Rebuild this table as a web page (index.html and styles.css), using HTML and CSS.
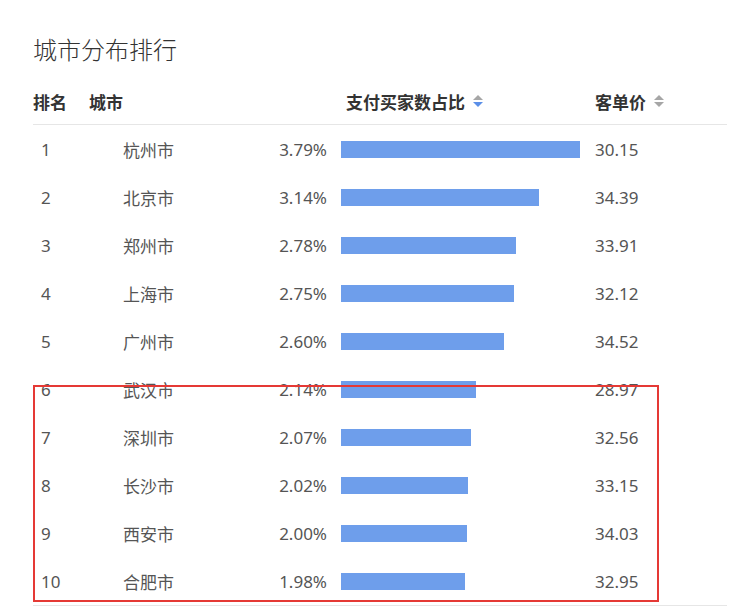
FILE: index.html
```html
<!DOCTYPE html>
<html lang="zh-CN">
<head>
<meta charset="utf-8">
<title>城市分布排行</title>
<link rel="stylesheet" href="styles.css">
</head>
<body>
<div class="panel">
  <h2 class="title">城市分布排行</h2>
  <div class="table">
    <div class="thead">
      <div class="th th-rank">排名</div>
      <div class="th th-city">城市</div>
      <div class="th th-pct">支付买家数占比<span class="sort active-down"><i class="up"></i><i class="down"></i></span></div>
      <div class="th th-price">客单价<span class="sort"><i class="up"></i><i class="down"></i></span></div>
    </div>
    <div class="tbody">
      <div class="row"><div class="c-rank">1</div><div class="c-city">杭州市</div><div class="c-pct">3.79%</div><div class="c-bar"><span class="bar" style="width:239px"></span></div><div class="c-price">30.15</div></div>
      <div class="row"><div class="c-rank">2</div><div class="c-city">北京市</div><div class="c-pct">3.14%</div><div class="c-bar"><span class="bar" style="width:198px"></span></div><div class="c-price">34.39</div></div>
      <div class="row"><div class="c-rank">3</div><div class="c-city">郑州市</div><div class="c-pct">2.78%</div><div class="c-bar"><span class="bar" style="width:175px"></span></div><div class="c-price">33.91</div></div>
      <div class="row"><div class="c-rank">4</div><div class="c-city">上海市</div><div class="c-pct">2.75%</div><div class="c-bar"><span class="bar" style="width:173px"></span></div><div class="c-price">32.12</div></div>
      <div class="row"><div class="c-rank">5</div><div class="c-city">广州市</div><div class="c-pct">2.60%</div><div class="c-bar"><span class="bar" style="width:163px"></span></div><div class="c-price">34.52</div></div>
      <div class="row"><div class="c-rank">6</div><div class="c-city">武汉市</div><div class="c-pct">2.14%</div><div class="c-bar"><span class="bar" style="width:135px"></span></div><div class="c-price">28.97</div></div>
      <div class="row"><div class="c-rank">7</div><div class="c-city">深圳市</div><div class="c-pct">2.07%</div><div class="c-bar"><span class="bar" style="width:130px"></span></div><div class="c-price">32.56</div></div>
      <div class="row"><div class="c-rank">8</div><div class="c-city">长沙市</div><div class="c-pct">2.02%</div><div class="c-bar"><span class="bar" style="width:127px"></span></div><div class="c-price">33.15</div></div>
      <div class="row"><div class="c-rank">9</div><div class="c-city">西安市</div><div class="c-pct">2.00%</div><div class="c-bar"><span class="bar" style="width:126px"></span></div><div class="c-price">34.03</div></div>
      <div class="row last"><div class="c-rank">10</div><div class="c-city">合肥市</div><div class="c-pct">1.98%</div><div class="c-bar"><span class="bar" style="width:124px"></span></div><div class="c-price">32.95</div></div>
      <div class="highlight"></div>
    </div>
  </div>
</div>
</body>
</html>
```
FILE: styles.css
```css
html, body {
  margin: 0;
  padding: 0;
  background: #ffffff;
}
body {
  font-family: "Noto Sans", "Noto Sans CJK SC", sans-serif;
  color: #555;
}
.panel {
  padding: 34px 23px 0 33px;
}
.title {
  margin: 0;
  font-size: 24px;
  line-height: 32px;
  font-weight: 300;
  color: #333;
}
.table {
  margin-top: 12px;
  width: 694px;
}
.thead {
  display: flex;
  align-items: center;
  height: 46px;
  border-bottom: 1px solid #e6e6e6;
  font-size: 17px;
  font-weight: 700;
  color: #333;
}
.th-rank { width: 56px; }
.th-city { width: 257px; }
.th-pct { width: 249px; display: flex; align-items: center; }
.th-price { flex: 1; display: flex; align-items: center; }
.sort {
  display: inline-flex;
  flex-direction: column;
  gap: 2px;
  margin-left: 8px;
}
.sort i {
  display: block;
  width: 0;
  height: 0;
  border-left: 5px solid transparent;
  border-right: 5px solid transparent;
}
.sort .up { border-bottom: 5px solid #a6a6a6; }
.sort .down { border-top: 5px solid #a6a6a6; }
.sort.active-down .down { border-top-color: #5b8fe8; }
.tbody {
  position: relative;
}
.row {
  display: flex;
  align-items: center;
  height: 48px;
  font-size: 17px;
  color: #555;
}
.row.last {
  border-bottom: 1px solid #e6e6e6;
}
.c-rank { width: 82px; padding-left: 8px; }
.c-city { width: 120px; }
.c-pct { width: 84px; text-align: right; }
.c-bar { width: 254px; margin-left: 14px; display: flex; }
.bar {
  display: block;
  height: 17px;
  background: #6e9eeb;
}
.c-price { flex: 1; }
.highlight {
  position: absolute;
  left: 0;
  top: 260px;
  width: 622px;
  height: 213px;
  border: 2px solid #e53935;
  pointer-events: none;
}
```
